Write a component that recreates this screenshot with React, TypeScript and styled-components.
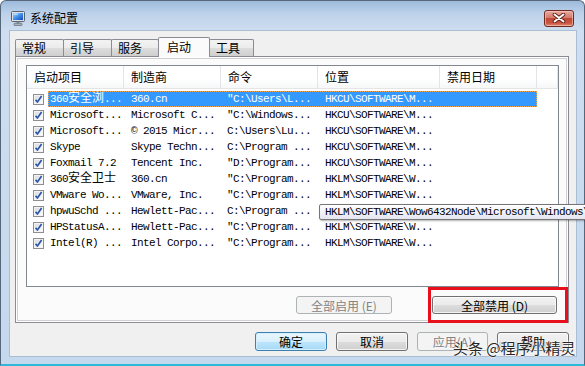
import React from "react";
import styled, { createGlobalStyle, css } from "styled-components";

const Global = createGlobalStyle`
  html, body { margin: 0; padding: 0; width: 585px; height: 366px; overflow: hidden; background: #fff; }
  #root { width: 585px; height: 366px; }
`;

const UI = `"Noto Sans CJK SC", "Liberation Sans", sans-serif`;
const MONO = `"Liberation Mono", "Noto Sans CJK SC", monospace`;

const Window = styled.div`
  position: relative;
  box-sizing: border-box;
  width: 585px;
  height: 366px;
  display: flex;
  flex-direction: column;
  background: linear-gradient(180deg, #9dbadb 0px, #bcd1ea 12px, #cfdef0 30px, #c4d8ee 100%);
  border: 1px solid #56677c;
  border-bottom: 2px solid #2fb9d9;
  border-radius: 6px 6px 0 0;
  padding: 0 7px 7px 8px;
  font-family: ${UI};
`;

const TitleBar = styled.div`
  height: 29px;
  box-sizing: border-box;
  padding-top: 5px;
  display: flex;
  align-items: center;
`;

const TitleIcon = styled.span`
  display: flex;
  margin-left: 2px;
  width: 14px;
  height: 15px;
`;

const TitleText = styled.span`
  margin-left: 5px;
  font-size: 12px;
  line-height: 14px;
  color: #000;
  flex: 1;
`;

const CloseBtn = styled.span`
  width: 30px;
  height: 17px;
  box-sizing: border-box;
  margin-right: 3px;
  border: 1px solid #6e2a22;
  border-radius: 3px;
  background: linear-gradient(180deg, #e8aaa0 0%, #d27a6c 45%, #c04a38 50%, #c9553f 80%, #de8a70 100%);
  box-shadow: inset 0 0 0 1px rgba(255, 210, 200, 0.55);
  display: flex;
  align-items: center;
  justify-content: center;
`;

const Client = styled.div`
  flex: 1;
  display: flex;
  flex-direction: column;
  background: #f0f0f0;
  border: 1px solid #a9bdd5;
  padding: 6px 7px 5px 5px;
`;

const TabStrip = styled.div`
  height: 19px;
  display: flex;
  align-items: flex-end;
`;

const Tab = styled.div<{ $w: number; $active?: boolean; $first?: boolean }>`
  position: relative;
  box-sizing: border-box;
  width: ${(p) => p.$w}px;
  height: 17px;
  margin-left: ${(p) => (p.$first ? 0 : -1)}px;
  border: 1px solid #898c95;
  border-bottom: none;
  border-radius: 2px 2px 0 0;
  background: linear-gradient(180deg, #f3f3f3 0%, #ebebeb 50%, #dddddd 51%, #cfcfcf 100%);
  font-size: 12px;
  line-height: 15px;
  padding-left: 6px;
  color: #000;
  ${(p) =>
    p.$active &&
    css`
      height: 20px;
      margin-bottom: -1px;
      z-index: 2;
      background: #fbfbfb;
      padding-left: 8px;
      line-height: 17px;
    `}
`;

const Panel = styled.div`
  box-sizing: border-box;
  height: 267px;
  border: 1px solid #898c95;
  background: #fbfbfb;
  box-shadow: inset 0 0 0 1px #ffffff, inset 0 0 0 2px #d0d0d0;
  padding: 8px 9px 8px 10px;
  display: flex;
  flex-direction: column;
`;

const List = styled.div`
  position: relative;
  box-sizing: border-box;
  width: 533px;
  height: 222px;
  border: 1px solid #828790;
  background: #fff;
`;

const Header = styled.div`
  display: flex;
  height: 22px;
  border-bottom: 1px solid #e5e5e5;
  background: linear-gradient(180deg, #ffffff 0%, #ffffff 60%, #f6f7f8 100%);
`;

const HeadCell = styled.div<{ $w?: number }>`
  box-sizing: border-box;
  ${(p) => (p.$w ? `width: ${p.$w}px; flex: none;` : "flex: 1;")}
  border-right: 1px solid #e3e4e6;
  padding-left: 7px;
  font-size: 12px;
  line-height: 22px;
  color: #000;
  white-space: nowrap;
`;

const Rows = styled.div`
  padding-top: 2px;
  display: flex;
  flex-direction: column;
`;

const Row = styled.div`
  display: flex;
  height: 16px;
`;

const CheckCell = styled.div`
  box-sizing: border-box;
  width: 21px;
  flex: none;
  padding-left: 6px;
  display: flex;
  align-items: center;
`;

const CheckBox = styled.span`
  box-sizing: border-box;
  width: 11px;
  height: 11px;
  border: 1px solid #8e8f8f;
  background: linear-gradient(135deg, #d6d9de 0%, #eef0f2 60%, #ffffff 100%);
  box-shadow: inset 0 0 0 1px #f4f4f4;
  display: flex;
  align-items: center;
  justify-content: center;
`;

const RowBody = styled.div<{ $sel?: boolean }>`
  display: grid;
  grid-template-columns: 76px 97px 97px 122px 97px;
  height: 16px;
  background: ${(p) => (p.$sel ? "#3399ff" : "transparent")};
  color: ${(p) => (p.$sel ? "#fff" : "#000")};
  outline: ${(p) => (p.$sel ? "1px dotted #f2a550" : "none")};
  outline-offset: -1px;
`;

const Cell = styled.div<{ $pl: number }>`
  box-sizing: border-box;
  padding-left: ${(p) => p.$pl}px;
  white-space: nowrap;
  font-family: ${MONO};
  font-size: 11px;
  letter-spacing: -0.6px;
  line-height: 16px;
  height: 16px;
`;

const Cjk = styled.span`
  font-family: ${UI};
  font-size: 12px;
  letter-spacing: 0;
  line-height: 1;
`;

const Tooltip = styled.div`
  position: absolute;
  left: 292px;
  top: 138px;
  height: 16px;
  box-sizing: border-box;
  border: 1px solid #767676;
  border-radius: 2px;
  background: linear-gradient(180deg, #ffffff 0%, #e4e5f0 100%);
  box-shadow: 1px 1px 2px rgba(0, 0, 0, 0.3);
  padding: 0 4px 0 5px;
  font-family: ${MONO};
  font-size: 11px;
  letter-spacing: -0.6px;
  line-height: 14px;
  color: #000;
  white-space: nowrap;
  z-index: 5;
`;

const ButtonRow = styled.div`
  display: flex;
  justify-content: flex-end;
  gap: 40px;
  margin-top: 9px;
  margin-right: 2px;
`;

const Button = styled.div<{ $w: number; $h: number; $disabled?: boolean; $default?: boolean }>`
  box-sizing: border-box;
  width: ${(p) => p.$w}px;
  height: ${(p) => p.$h}px;
  border: 1px solid #707070;
  border-radius: 3px;
  background: linear-gradient(180deg, #f2f2f2 0%, #ebebeb 50%, #dddddd 51%, #cfcfcf 100%);
  box-shadow: inset 0 0 0 1px rgba(255, 255, 255, 0.75);
  font-size: 12px;
  color: #000;
  display: flex;
  align-items: center;
  justify-content: center;
  white-space: nowrap;
  ${(p) =>
    p.$disabled &&
    css`
      border-color: #adb2b5;
      background: #f4f4f4;
      box-shadow: none;
      color: #838383;
    `}
  ${(p) =>
    p.$default &&
    css`
      border-color: #3c7fb1;
      background: linear-gradient(180deg, #eaf6fd 0%, #d9f0fc 50%, #bee6fd 51%, #a7d9f5 100%);
      box-shadow: inset 0 0 0 1px #d4effc;
    `}
`;

const Highlight = styled.div`
  position: relative;
  display: flex;
  &::after {
    content: "";
    position: absolute;
    left: -4px;
    top: -9px;
    right: -11px;
    bottom: -9px;
    border: 3px solid #e8101a;
    pointer-events: none;
  }
`;

const Footer = styled.div`
  display: flex;
  justify-content: flex-end;
  gap: 9px;
  margin-top: 9px;
`;

const Watermark = styled.div`
  position: absolute;
  left: 452px;
  top: 339px;
  font-family: ${UI};
  font-size: 15px;
  line-height: 16px;
  color: #262626;
  white-space: nowrap;
  text-shadow: 0 0 2px #fff, 0 0 2px #fff, 0 0 1px #fff;
  z-index: 6;
`;

function Mixed({ text }: { text: string }) {
  const parts = text.split(/([\u3000-\u9fff\uff00-\uffef]+)/);
  return (
    <>
      {parts.map((p, i) =>
        /[\u3000-\u9fff\uff00-\uffef]/.test(p) ? <Cjk key={i}>{p}</Cjk> : <React.Fragment key={i}>{p}</React.Fragment>
      )}
    </>
  );
}

const rows: string[][] = [
  ["360安全浏...", "360.cn", "\"C:\\Users\\L...", "HKCU\\SOFTWARE\\M..."],
  ["Microsoft...", "Microsoft C...", "\"C:\\Windows...", "HKCU\\SOFTWARE\\M..."],
  ["Microsoft...", "© 2015 Micr...", "C:\\Users\\Lu...", "HKCU\\SOFTWARE\\M..."],
  ["Skype", "Skype Techn...", "C:\\Program ...", "HKCU\\SOFTWARE\\M..."],
  ["Foxmail 7.2", "Tencent Inc.", "\"D:\\Program...", "HKCU\\SOFTWARE\\M..."],
  ["360安全卫士", "360.cn", "\"C:\\Program...", "HKLM\\SOFTWARE\\W..."],
  ["VMware Wo...", "VMware, Inc.", "\"C:\\Program...", "HKLM\\SOFTWARE\\W..."],
  ["hpwuSchd ...", "Hewlett-Pac...", "C:\\Program ...", "HKLM\\SOFTWARE\\W..."],
  ["HPStatusA...", "Hewlett-Pac...", "\"C:\\Program...", "HKLM\\SOFTWARE\\W..."],
  ["Intel(R) ...", "Intel Corpo...", "\"C:\\Program...", "HKLM\\SOFTWARE\\W..."],
];

const MonitorIcon = () => (
  <svg width="14" height="15" viewBox="0 0 14 15">
    <defs>
      <linearGradient id="scr" x1="0" y1="0" x2="1" y2="1">
        <stop offset="0" stopColor="#a8d8ff" />
        <stop offset="0.5" stopColor="#3f8fe8" />
        <stop offset="1" stopColor="#1448b8" />
      </linearGradient>
    </defs>
    <rect x="0.5" y="0.5" width="13" height="10" rx="1" fill="#dfe3e8" stroke="#56606e" />
    <rect x="2" y="2" width="10" height="7" fill="url(#scr)" />
    <path d="M3 3.2h4" stroke="#e8f6ff" strokeWidth="0.8" />
    <path d="M5.5 10.5h3v2h-3z" fill="#7c8590" />
    <rect x="3" y="12.3" width="8" height="2.2" rx="0.6" fill="#a9b1ba" stroke="#56606e" strokeWidth="0.6" />
  </svg>
);

const CloseX = () => (
  <svg width="14" height="10" viewBox="0 0 14 10">
    <path d="M2.5 1.5 L11.5 8.5 M11.5 1.5 L2.5 8.5" stroke="#5e1a12" strokeWidth="3.6" strokeLinecap="round" />
    <path d="M2.5 1.5 L11.5 8.5 M11.5 1.5 L2.5 8.5" stroke="#ffffff" strokeWidth="2" strokeLinecap="round" />
  </svg>
);

const Check = () => (
  <svg width="9" height="9" viewBox="0 0 9 9">
    <path d="M1.5 4.8 L3.4 7 L7.6 1" fill="none" stroke="#2f55a8" strokeWidth="1.7" strokeLinejoin="round" />
  </svg>
);

export default function App() {
  return (
    <>
      <Global />
      <Window>
        <TitleBar>
          <TitleIcon>
            <MonitorIcon />
          </TitleIcon>
          <TitleText>系统配置</TitleText>
          <CloseBtn>
            <CloseX />
          </CloseBtn>
        </TitleBar>
        <Client>
          <TabStrip>
            <Tab $w={49} $first>常规</Tab>
            <Tab $w={49}>引导</Tab>
            <Tab $w={48}>服务</Tab>
            <Tab $w={52} $active>启动</Tab>
            <Tab $w={45}>工具</Tab>
          </TabStrip>
          <Panel>
            <List>
              <Header>
                <HeadCell $w={97}>启动项目</HeadCell>
                <HeadCell $w={97}>制造商</HeadCell>
                <HeadCell $w={97}>命令</HeadCell>
                <HeadCell $w={122}>位置</HeadCell>
                <HeadCell $w={97}>禁用日期</HeadCell>
                <HeadCell />
              </Header>
              <Rows>
                {rows.map((r, i) => (
                  <Row key={i}>
                    <CheckCell>
                      <CheckBox>
                        <Check />
                      </CheckBox>
                    </CheckCell>
                    <RowBody $sel={i === 0}>
                      <Cell $pl={2}>
                        <Mixed text={r[0]} />
                      </Cell>
                      <Cell $pl={7}>{r[1]}</Cell>
                      <Cell $pl={6}>{r[2]}</Cell>
                      <Cell $pl={7}>{i === 7 ? "" : r[3]}</Cell>
                      <Cell $pl={7}></Cell>
                    </RowBody>
                  </Row>
                ))}
              </Rows>
              <Tooltip>HKLM\SOFTWARE\Wow6432Node\Microsoft\Windows\CurrentVersion\Run</Tooltip>
            </List>
            <ButtonRow>
              <Button $w={96} $h={18} $disabled>
                全部启用 (E)
              </Button>
              <Highlight>
                <Button $w={125} $h={18}>
                  全部禁用 (D)
                </Button>
              </Highlight>
            </ButtonRow>
          </Panel>
          <Footer>
            <Button $w={72} $h={19} $default>
              确定
            </Button>
            <Button $w={72} $h={19}>
              取消
            </Button>
            <Button $w={71} $h={19} $disabled>
              应用(A)
            </Button>
            <Button $w={72} $h={19}>
              帮助
            </Button>
          </Footer>
        </Client>
        <Watermark>头条 @程序小精灵</Watermark>
      </Window>
    </>
  );
}
